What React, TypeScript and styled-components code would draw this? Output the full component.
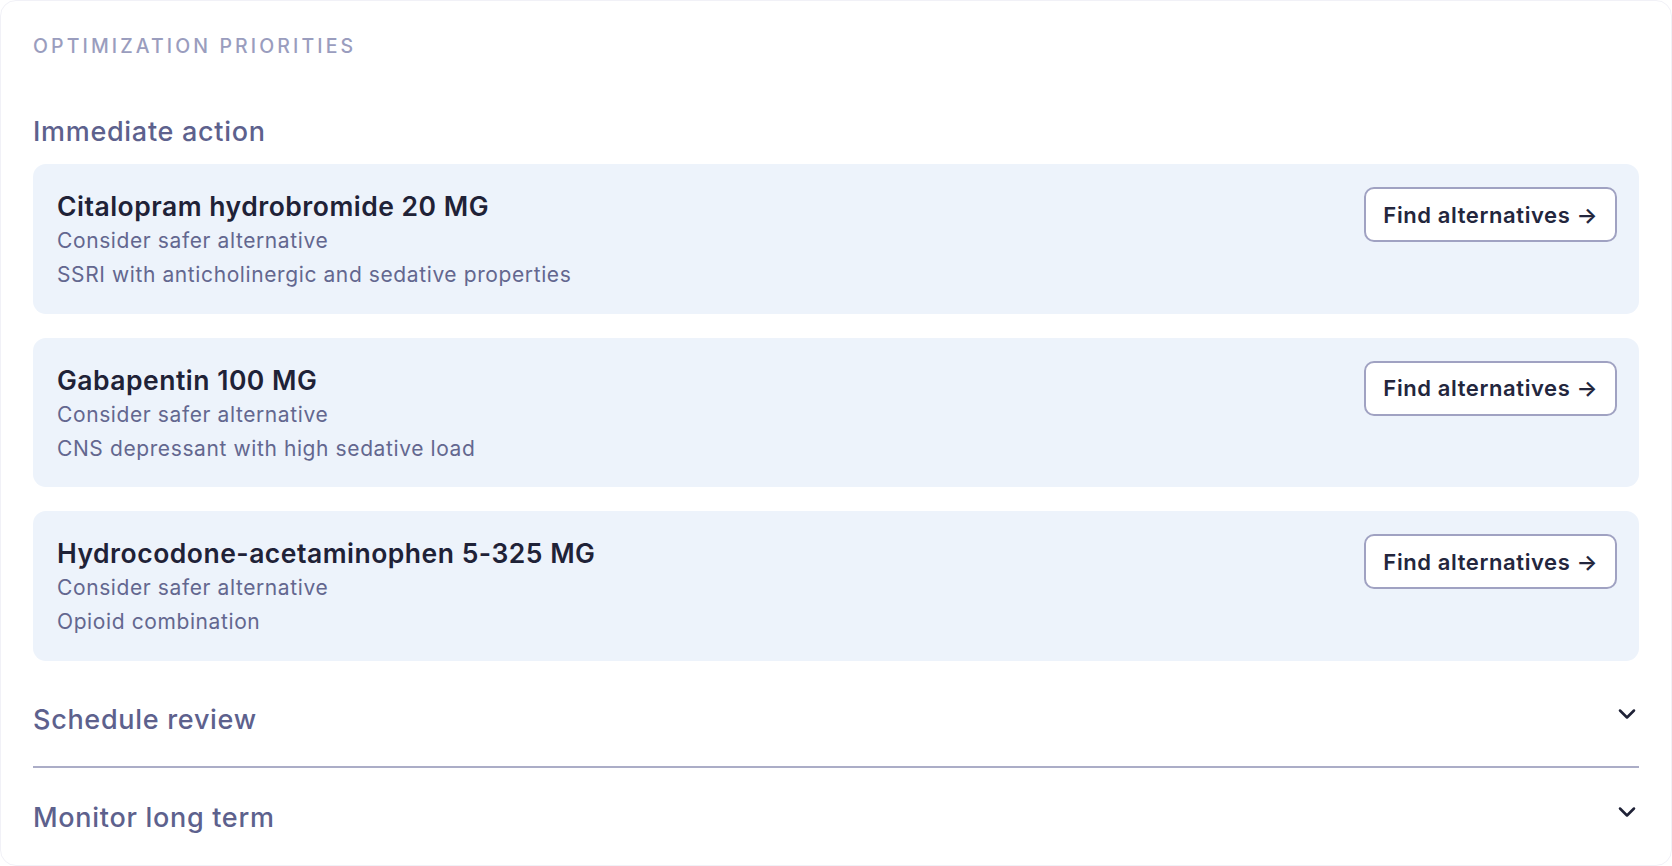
import React from "react";
import styled, { createGlobalStyle } from "styled-components";

const GlobalStyle = createGlobalStyle`
  html, body { margin: 0; padding: 0; background: #ffffff; }
  body { font-family: Inter, "Noto Sans", sans-serif; -webkit-font-smoothing: antialiased; }
  * { box-sizing: border-box; }
`;

const Panel = styled.section`
  width: 1672px;
  height: 866px;
  background: #ffffff;
  border: 1px solid #f1f1f7;
  border-radius: 16px;
  padding: 32px 32px 0 32px;
  overflow: hidden;
`;

const Eyebrow = styled.div`
  font-size: 19.5px;
  line-height: 26px;
  font-weight: 500;
  letter-spacing: 3.1px;
  text-transform: uppercase;
  color: #9a9dbe;
`;

const SectionTitle = styled.h3`
  margin: 0;
  font-size: 27px;
  line-height: 36px;
  font-weight: 500;
  letter-spacing: 0.7px;
  color: #5d618d;
`;

const ImmediateSection = styled.div`
  margin-top: 55px;
  display: flex;
  flex-direction: column;
`;

const CardList = styled.div`
  margin-top: 14px;
  display: flex;
  flex-direction: column;
  gap: 24px;
`;

const Card = styled.div`
  background: #edf3fb;
  border-radius: 13px;
  padding: 23px 22px 21.5px 24px;
  display: flex;
  justify-content: space-between;
  align-items: flex-start;
`;

const CardText = styled.div`
  display: flex;
  flex-direction: column;
  padding-top: 1px;
`;

const DrugName = styled.div`
  font-size: 26.5px;
  line-height: 36px;
  font-weight: 600;
  letter-spacing: 0.5px;
  color: #1f2237;
`;

const Detail = styled.div`
  font-size: 21px;
  line-height: 34px;
  font-weight: 400;
  letter-spacing: 0.6px;
  color: #63678f;
`;

const ActionButton = styled.button`
  font-family: Inter, "Noto Sans", sans-serif;
  height: 55px;
  padding: 0 17px;
  background: #ffffff;
  border: 2px solid #a0a2c2;
  border-radius: 10px;
  font-size: 22px;
  font-weight: 600;
  letter-spacing: 0.6px;
  color: #23263d;
  cursor: pointer;
  display: flex;
  align-items: center;
  gap: 6px;
`;

const AccordionHeader = styled.div<{ $divider?: boolean }>`
  display: flex;
  justify-content: space-between;
  align-items: flex-start;
  padding: 32px 0 28px 0;
  border-bottom: ${(p) => (p.$divider ? "2px solid #abadc7" : "none")};
`;

const AccordionGroup = styled.div`
  margin-top: 9px;
`;

const Chevron = styled.svg`
  width: 28px;
  height: 28px;
  margin-top: -2px;
  margin-right: -2px;
  flex: none;
`;

const ChevronDown = () => (
  <Chevron viewBox="0 0 24 24" fill="none" stroke="#1f2237" strokeWidth={2.2} strokeLinecap="round" strokeLinejoin="round">
    <path d="m6 9 6 6 6-6" />
  </Chevron>
);

const items = [
  {
    name: "Citalopram hydrobromide 20 MG",
    action: "Consider safer alternative",
    reason: "SSRI with anticholinergic and sedative properties",
  },
  {
    name: "Gabapentin 100 MG",
    action: "Consider safer alternative",
    reason: "CNS depressant with high sedative load",
  },
  {
    name: "Hydrocodone-acetaminophen 5-325 MG",
    action: "Consider safer alternative",
    reason: "Opioid combination",
  },
];

export default function App() {
  return (
    <>
      <GlobalStyle />
      <Panel>
        <Eyebrow>Optimization priorities</Eyebrow>
        <ImmediateSection>
          <SectionTitle>Immediate action</SectionTitle>
          <CardList>
            {items.map((it) => (
              <Card key={it.name}>
                <CardText>
                  <DrugName>{it.name}</DrugName>
                  <Detail>{it.action}</Detail>
                  <Detail>{it.reason}</Detail>
                </CardText>
                <ActionButton>
                  Find alternatives <span>→</span>
                </ActionButton>
              </Card>
            ))}
          </CardList>
        </ImmediateSection>
        <AccordionGroup>
          <AccordionHeader $divider>
            <SectionTitle>Schedule review</SectionTitle>
            <ChevronDown />
          </AccordionHeader>
          <AccordionHeader>
            <SectionTitle>Monitor long term</SectionTitle>
            <ChevronDown />
          </AccordionHeader>
        </AccordionGroup>
      </Panel>
    </>
  );
}
